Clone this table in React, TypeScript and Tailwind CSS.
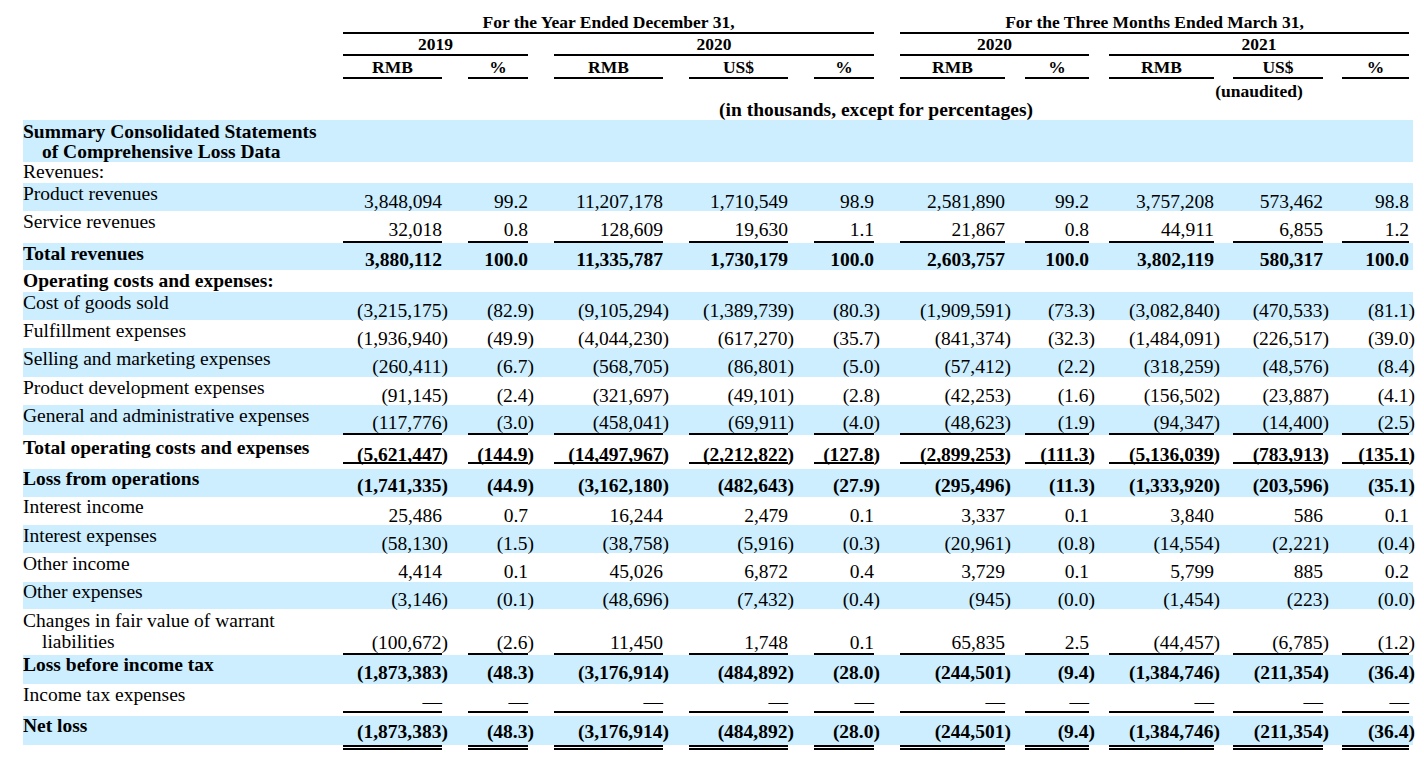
import React from "react";

// column widths and left gaps, shared by header and body
const cols = [
  { w: "w-[99px]", ml: "ml-0" },
  { w: "w-[60px]", ml: "ml-[26px]" },
  { w: "w-[109px]", ml: "ml-[26px]" },
  { w: "w-[99px]", ml: "ml-[26px]" },
  { w: "w-[60px]", ml: "ml-[26px]" },
  { w: "w-[105px]", ml: "ml-[26px]" },
  { w: "w-[64px]", ml: "ml-[20px]" },
  { w: "w-[105px]", ml: "ml-[20px]" },
  { w: "w-[90px]", ml: "ml-[19px]" },
  { w: "w-[67px]", ml: "ml-[19px]" },
];

const units = ["RMB", "%", "RMB", "US$", "%", "RMB", "%", "RMB", "US$", "%"];

type Row = {
  label: string[];
  bold?: boolean;
  h: string;
  lp: string;
  np?: string;
  cell?: string;
  lead?: string;
  values?: string[];
};

const dash = Array(10).fill("—");

const rows: Row[] = [
  { label: ["Summary Consolidated Statements", "of Comprehensive Loss Data"], bold: true, h: "h-[42px]", lp: "pt-[2px]" },
  { label: ["Revenues:"], h: "h-[21px]", lp: "pt-0" },
  {
    label: ["Product revenues"], h: "h-[28px]", lp: "pt-[1px]",
    values: ["3,848,094", "99.2", "11,207,178", "1,710,549", "98.9", "2,581,890", "99.2", "3,757,208", "573,462", "98.8"],
  },
  {
    label: ["Service revenues"], h: "h-[32px]", lp: "pt-[1px]", cell: "h-[32px] border-b-2",
    values: ["32,018", "0.8", "128,609", "19,630", "1.1", "21,867", "0.8", "44,911", "6,855", "1.2"],
  },
  {
    label: ["Total revenues"], bold: true, h: "h-[27px]", lp: "pt-[1px]", np: "pt-[7px]",
    values: ["3,880,112", "100.0", "11,335,787", "1,730,179", "100.0", "2,603,757", "100.0", "3,802,119", "580,317", "100.0"],
  },
  { label: ["Operating costs and expenses:"], bold: true, h: "h-[22px]", lp: "pt-[1px]" },
  {
    label: ["Cost of goods sold"], h: "h-[28px]", lp: "pt-[1px]",
    values: ["(3,215,175)", "(82.9)", "(9,105,294)", "(1,389,739)", "(80.3)", "(1,909,591)", "(73.3)", "(3,082,840)", "(470,533)", "(81.1)"],
  },
  {
    label: ["Fulfillment expenses"], h: "h-[28px]", lp: "pt-[1px]",
    values: ["(1,936,940)", "(49.9)", "(4,044,230)", "(617,270)", "(35.7)", "(841,374)", "(32.3)", "(1,484,091)", "(226,517)", "(39.0)"],
  },
  {
    label: ["Selling and marketing expenses"], h: "h-[29px]", lp: "pt-[1px]",
    values: ["(260,411)", "(6.7)", "(568,705)", "(86,801)", "(5.0)", "(57,412)", "(2.2)", "(318,259)", "(48,576)", "(8.4)"],
  },
  {
    label: ["Product development expenses"], h: "h-[28px]", lp: "pt-[1px]",
    values: ["(91,145)", "(2.4)", "(321,697)", "(49,101)", "(2.8)", "(42,253)", "(1.6)", "(156,502)", "(23,887)", "(4.1)"],
  },
  {
    label: ["General and administrative expenses"], h: "h-[30px]", lp: "pt-[1px]", np: "pt-[8px]", cell: "h-[30px] border-b-2",
    values: ["(117,776)", "(3.0)", "(458,041)", "(69,911)", "(4.0)", "(48,623)", "(1.9)", "(94,347)", "(14,400)", "(2.5)"],
  },
  {
    label: ["Total operating costs and expenses"], bold: true, h: "h-[34px]", lp: "pt-[3px]", np: "pt-[10px]", cell: "h-[29px] border-b-2",
    values: ["(5,621,447)", "(144.9)", "(14,497,967)", "(2,212,822)", "(127.8)", "(2,899,253)", "(111.3)", "(5,136,039)", "(783,913)", "(135.1)"],
  },
  {
    label: ["Loss from operations"], bold: true, h: "h-[28px]", lp: "pt-0", np: "pt-[7px]",
    values: ["(1,741,335)", "(44.9)", "(3,162,180)", "(482,643)", "(27.9)", "(295,496)", "(11.3)", "(1,333,920)", "(203,596)", "(35.1)"],
  },
  {
    label: ["Interest income"], h: "h-[28px]", lp: "pt-0",
    values: ["25,486", "0.7", "16,244", "2,479", "0.1", "3,337", "0.1", "3,840", "586", "0.1"],
  },
  {
    label: ["Interest expenses"], h: "h-[28px]", lp: "pt-[1px]",
    values: ["(58,130)", "(1.5)", "(38,758)", "(5,916)", "(0.3)", "(20,961)", "(0.8)", "(14,554)", "(2,221)", "(0.4)"],
  },
  {
    label: ["Other income"], h: "h-[29px]", lp: "pt-[1px]",
    values: ["4,414", "0.1", "45,026", "6,872", "0.4", "3,729", "0.1", "5,799", "885", "0.2"],
  },
  {
    label: ["Other expenses"], h: "h-[27px]", lp: "pt-0", np: "pt-[8px]",
    values: ["(3,146)", "(0.1)", "(48,696)", "(7,432)", "(0.4)", "(945)", "(0.0)", "(1,454)", "(223)", "(0.0)"],
  },
  {
    label: ["Changes in fair value of warrant", "liabilities"], h: "h-[46px]", lp: "pt-[1px]", lead: "leading-[21px]", np: "pt-[24px]", cell: "h-[46px] border-b-2",
    values: ["(100,672)", "(2.6)", "11,450", "1,748", "0.1", "65,835", "2.5", "(44,457)", "(6,785)", "(1.2)"],
  },
  {
    label: ["Loss before income tax"], bold: true, h: "h-[29px]", lp: "pt-0", np: "pt-[8px]",
    values: ["(1,873,383)", "(48.3)", "(3,176,914)", "(484,892)", "(28.0)", "(244,501)", "(9.4)", "(1,384,746)", "(211,354)", "(36.4)"],
  },
  { label: ["Income tax expenses"], h: "h-[32px]", lp: "pt-[1px]", np: "pt-[8px]", cell: "h-[29px] border-b-2", values: dash },
  {
    label: ["Net loss"], bold: true, h: "h-[29px]", lp: "pt-0", np: "pt-[6px]", cell: "h-[34px] border-b-[5px] border-double",
    values: ["(1,873,383)", "(48.3)", "(3,176,914)", "(484,892)", "(28.0)", "(244,501)", "(9.4)", "(1,384,746)", "(211,354)", "(36.4)"],
  },
];

function Num({ v }: { v: string }) {
  if (v.startsWith("(")) {
    return (
      <>
        {v.slice(0, -1)}
        <span className="-mr-[6px]">)</span>
      </>
    );
  }
  return <>{v}</>;
}

function Header() {
  return (
    <div className="text-[17.5px] leading-[20px] font-bold">
      {/* period groups */}
      <div className="flex h-[34px]">
        <div className="ml-[343px] w-[531px] border-b-2 border-black pt-[12px] text-center">
          For the Year Ended December 31,
        </div>
        <div className="ml-[26px] w-[509px] border-b-2 border-black pt-[12px] text-center">
          For the Three Months Ended March 31,
        </div>
      </div>
      {/* years */}
      <div className="flex h-[22px]">
        <div className="ml-[343px] w-[185px] border-b-2 border-black text-center">2019</div>
        <div className="ml-[26px] w-[320px] border-b-2 border-black text-center">2020</div>
        <div className="ml-[26px] w-[189px] border-b-2 border-black text-center">2020</div>
        <div className="ml-[20px] w-[300px] border-b-2 border-black text-center">2021</div>
      </div>
      {/* currency units */}
      <div className="flex h-[23px] pl-[343px]">
        {cols.map((c, i) => (
          <div key={i} className={`${c.w} ${c.ml} border-b-2 border-black pt-[1px] text-center`}>
            {units[i]}
          </div>
        ))}
      </div>
      <div className="flex h-[21px]">
        <div className="ml-[1109px] w-[300px] pt-[2px] text-center">(unaudited)</div>
      </div>
      <div className="ml-[343px] h-[20px] w-[1066px] text-center text-[19.5px]">
        (in thousands, except for percentages)
      </div>
    </div>
  );
}

function BodyRow({ row, band }: { row: Row; band: boolean }) {
  return (
    <div className={`flex ${row.h} ${band ? "bg-[#cceeff]" : ""} ${row.bold ? "font-bold" : ""}`}>
      <div className={`w-[320px] shrink-0 ${row.lp} ${row.lead ?? ""}`}>
        {row.label.map((l, i) => (
          <div key={i} className={i > 0 ? "pl-[19px]" : ""}>
            {l}
          </div>
        ))}
      </div>
      {row.values &&
        cols.map((c, i) => (
          <div
            key={i}
            className={`${c.w} ${c.ml} shrink-0 whitespace-nowrap text-right border-black ${row.np ?? "pt-[9px]"} ${row.cell ?? ""}`}
          >
            <Num v={row.values![i]} />
          </div>
        ))}
    </div>
  );
}

export default function App() {
  return (
    <div className="h-[758px] w-[1424px] overflow-hidden bg-white font-['Liberation_Serif','Times_New_Roman',serif] text-black">
      <Header />
      <div className="ml-[23px] w-[1390px] text-[19.5px] leading-[20px]">
        {rows.map((r, i) => (
          <BodyRow key={i} row={r} band={i % 2 === 0} />
        ))}
      </div>
    </div>
  );
}
